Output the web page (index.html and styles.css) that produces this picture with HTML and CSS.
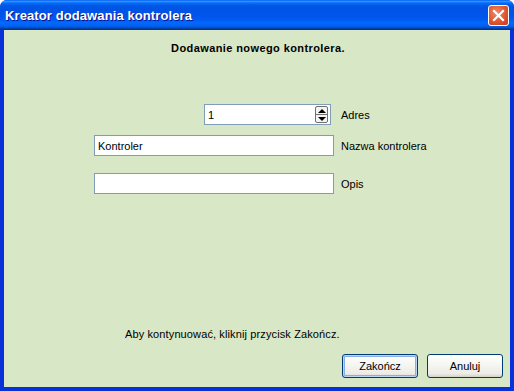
FILE: index.html
```html
<!DOCTYPE html>
<html>
<head>
<meta charset="utf-8">
<link rel="stylesheet" href="styles.css">
</head>
<body>
<div class="window">
  <div class="titlebar">
    <span class="title">Kreator dodawania kontrolera</span>
    <span class="close"><svg width="13" height="13" viewBox="0 0 13 13"><path d="M2 2 L11 11 M11 2 L2 11" stroke="#fff" stroke-width="2.2" stroke-linecap="square"/></svg></span>
  </div>
  <div class="content">
    <div class="heading">Dodawanie nowego kontrolera.</div>
    <div class="form">
      <div class="spinner">
        <span class="val">1</span>
        <span class="spin">
          <span class="up"></span>
          <span class="down"></span>
        </span>
      </div>
      <span class="label lab-adres">Adres</span>
      <div class="textbox tb1">Kontroler</div>
      <span class="label lab-nazwa">Nazwa kontrolera</span>
      <div class="textbox tb2"></div>
      <span class="label lab-opis">Opis</span>
    </div>
    <div class="footer-text">Aby kontynuować, kliknij przycisk Zakończ.</div>
    <div class="buttons">
      <button class="btn default">Zakończ</button>
      <button class="btn">Anuluj</button>
    </div>
  </div>
</div>
</body>
</html>
```

FILE: styles.css
```css
html, body {
  margin: 0;
  padding: 0;
}
body {
  width: 514px;
  height: 391px;
  overflow: hidden;
  font-family: "Liberation Sans", Arial, sans-serif;
  font-size: 11px;
  color: #000;
}
.window {
  width: 514px;
  height: 391px;
  box-sizing: border-box;
  display: flex;
  flex-direction: column;
  background: #0831d9;
  border-radius: 7px 7px 0 0;
  overflow: hidden;
}
.titlebar {
  height: 30px;
  flex: none;
  display: flex;
  align-items: center;
  justify-content: space-between;
  padding: 0 5px 0 5px;
  background: linear-gradient(to bottom, #0058ee 0%, #3593ff 4%, #288eff 6%, #127dff 8%, #036ffc 10%, #0262ee 14%, #0057e5 20%, #0054e3 24%, #0055eb 56%, #005bf5 66%, #026afe 76%, #0062ef 86%, #0052d6 92%, #0040ab 94%, #003092 100%);
}
.title {
  color: #fff;
  font-weight: bold;
  font-size: 13px;
  letter-spacing: 0.1px;
  text-shadow: 1px 1px 0 #0f1089;
  padding-top: 1px;
}
.close {
  width: 19px;
  height: 19px;
  border: 1px solid #fff;
  border-radius: 3px;
  background: radial-gradient(circle at 40% 35%, #f08a6c 0%, #e0552f 55%, #c53b1a 100%);
  display: flex;
  align-items: center;
  justify-content: center;
  margin-top: 1px;
}
.content {
  flex: 1;
  margin: 0 4px 4px 4px;
  background: #d8e7c6;
  display: flex;
  flex-direction: column;
}
.heading {
  font-weight: bold;
  text-align: center;
  margin-top: 12px;
  padding-left: 2px;
  font-size: 11px;
  letter-spacing: 0.4px;
}
.form {
  display: grid;
  grid-template-columns: 240px auto;
  column-gap: 7px;
  margin-left: 90px;
  margin-top: 50px;
  align-items: center;
}
.label {
  font-size: 11px;
}
.spinner {
  justify-self: end;
  margin-right: 3px;
  width: 127px;
  height: 21px;
  box-sizing: border-box;
  border: 1px solid #7f9db9;
  background: #fff;
  display: flex;
  align-items: center;
  justify-content: space-between;
  padding-left: 3px;
  padding-right: 2px;
}
.spin {
  width: 13px;
  height: 17px;
  box-sizing: border-box;
  border: 1px solid #6f6f6f;
  border-radius: 2px;
  display: flex;
  flex-direction: column;
  background: #f4f4f0;
}
.spin .up, .spin .down {
  flex: 1;
  display: flex;
  align-items: center;
  justify-content: center;
}
.spin .up {
  border-bottom: 1px solid #6f6f6f;
}
.spin .up::after {
  content: "";
  border-left: 4px solid transparent;
  border-right: 4px solid transparent;
  border-bottom: 4px solid #000;
}
.spin .down::after {
  content: "";
  border-left: 4px solid transparent;
  border-right: 4px solid transparent;
  border-top: 4px solid #000;
}
.textbox {
  width: 240px;
  height: 21px;
  box-sizing: border-box;
  border: 1px solid #7f9db9;
  background: #fff;
  padding: 4px 0 0 3px;
  font-size: 11px;
}
.tb1 {
  margin-top: 10px;
}
.lab-nazwa {
  margin-top: 10px;
}
.tb2 {
  margin-top: 17px;
}
.lab-opis {
  margin-top: 17px;
}
.footer-text {
  margin-top: auto;
  margin-left: 121px;
  font-size: 11px;
  letter-spacing: 0.12px;
}
.buttons {
  display: flex;
  justify-content: flex-end;
  gap: 9px;
  margin: 14px 7px 9px 0;
}
.btn {
  width: 76px;
  height: 24px;
  font-family: "Liberation Sans", Arial, sans-serif;
  font-size: 11px;
  color: #000;
  border: 1px solid #003c74;
  border-radius: 3px;
  background: linear-gradient(to bottom, #ffffff 0%, #f4f4f0 50%, #ecebe6 85%, #d6d0c5 100%);
  padding: 0;
}
.btn.default {
  box-shadow: inset 0 0 0 1px #bcd4f6, inset 0 0 0 2px #89ade4;
}
```
